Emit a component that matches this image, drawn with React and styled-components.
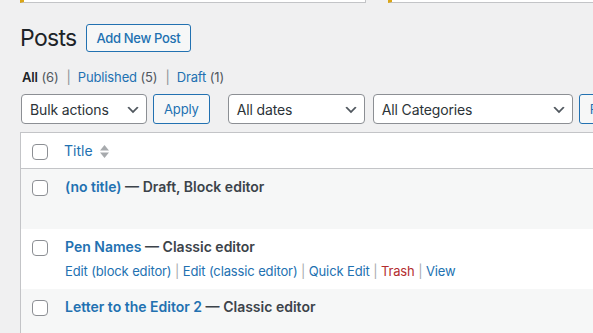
import React from "react";
import styled, { createGlobalStyle } from "styled-components";

const GlobalStyle = createGlobalStyle`
  body {
    margin: 0;
    background: #f0f0f1;
    font-family: Inter, "Noto Sans", sans-serif;
    color: #3c434a;
    overflow: hidden;
  }
`;

const Wrap = styled.div`
  padding-left: 20px;
  width: 780px;
`;

const NoticeRow = styled.div`
  display: flex;
  gap: 22px;
  margin-top: -30px;
`;

const Notice = styled.div`
  box-sizing: border-box;
  height: 33px;
  width: ${(p) => (p.$grow ? "auto" : "346px")};
  flex: ${(p) => (p.$grow ? "1" : "none")};
  background: #fff;
  border: 1px solid #c3c4c7;
  border-left: 4px solid #dba617;
`;

const HeaderRow = styled.div`
  display: flex;
  align-items: center;
  gap: 9px;
  margin-top: 21px;
  height: 28px;
`;

const Heading = styled.h1`
  margin: 0;
  font-size: 23px;
  font-weight: 400;
  letter-spacing: -0.03em;
  color: #1d2327;
  line-height: 28px;
`;

const OutlineButton = styled.button`
  box-sizing: border-box;
  height: ${(p) => p.$h || "30px"};
  padding: 0 10px;
  background: #f6f7f7;
  border: 1px solid #2271b1;
  border-radius: 3px;
  color: #2271b1;
  font-family: inherit;
  font-size: 13px;
  font-weight: ${(p) => p.$weight || 400};
  letter-spacing: ${(p) => (p.$weight ? "-0.025em" : "-0.01em")};
  cursor: pointer;
  flex: none;
`;

const Views = styled.ul`
  display: flex;
  list-style: none;
  margin: 15px 0 0;
  padding: 0 0 0 2px;
  font-size: 13px;
  line-height: 20px;
  letter-spacing: -0.01em;
  color: #50575e;
`;

const ViewItem = styled.li`
  white-space: pre;
`;

const ViewLink = styled.a`
  color: ${(p) => (p.$current ? "#1d2327" : "#2271b1")};
  font-weight: ${(p) => (p.$current ? 600 : 400)};
  text-decoration: none;
`;

const Sep = styled.span`
  color: #8c8f94;
  padding: 0 7px 0 8px;
`;

const Toolbar = styled.div`
  display: flex;
  align-items: center;
  margin-top: 7px;
  padding-left: 1px;
`;

const Group = styled.div`
  display: flex;
  gap: ${(p) => p.$gap || "6px"};
  margin-right: ${(p) => p.$mr || "0"};
`;

const SelectBox = styled.div`
  box-sizing: border-box;
  width: ${(p) => p.$w};
  height: 30px;
  display: flex;
  align-items: center;
  justify-content: space-between;
  padding: 0 5px 0 8px;
  background: #fff;
  border: 1px solid #8c8f94;
  border-radius: 4px;
  font-size: 14px;
  letter-spacing: -0.01em;
  color: #2c3338;
  flex: none;
`;

const Chevron = styled.svg`
  width: 16px;
  height: 16px;
  margin-top: 2px;
  fill: #50575e;
`;

const Select = ({ w, children }) => (
  <SelectBox $w={w}>
    <span>{children}</span>
    <Chevron viewBox="0 0 20 20">
      <path d="M5 6l5 5 5-5 2 1-7 7-7-7 2-1z" />
    </Chevron>
  </SelectBox>
);

const Table = styled.div`
  margin-top: 8px;
  background: #fff;
  border: 1px solid #c3c4c7;
`;

const Row = styled.div`
  display: flex;
  background: ${(p) => (p.$alt ? "#f6f7f7" : "#fff")};
  border-bottom: ${(p) => (p.$head ? "1px solid #c3c4c7" : "none")};
  height: ${(p) => (p.$head ? "35px" : "60px")};
  box-sizing: ${(p) => (p.$head ? "content-box" : "border-box")};
`;

const CheckCell = styled.div`
  width: 33px;
  padding-left: 11px;
  padding-top: 11px;
  box-sizing: border-box;
  flex: none;
`;

const Checkbox = styled.span`
  display: block;
  box-sizing: border-box;
  width: 16px;
  height: 16px;
  border: 1px solid #8c8f94;
  border-radius: 4px;
  background: #fff;
`;

const HeadCell = styled.div`
  display: flex;
  align-items: center;
  gap: 7px;
  padding-left: 10px;
  font-size: 14px;
  color: #2271b1;
`;

const SortIcon = styled.svg`
  width: 9px;
  height: 13px;
  fill: #a7aaad;
  margin-top: 1px;
`;

const TitleCell = styled.div`
  padding: 8px 0 0 11px;
`;

const RowTitle = styled.div`
  font-size: 14px;
  font-weight: 600;
  line-height: 20px;
  color: #3c434a;
`;

const TitleLink = styled.a`
  color: #2271b1;
  text-decoration: none;
`;

const Actions = styled.div`
  padding-top: 4px;
  font-size: 13px;
  line-height: 20px;
  letter-spacing: -0.01em;
  color: #a7aaad;
  visibility: ${(p) => (p.$show ? "visible" : "hidden")};
  white-space: pre;
`;

const ActionLink = styled.a`
  color: ${(p) => (p.$danger ? "#b32d2e" : "#2271b1")};
  text-decoration: none;
`;

const posts = [
  { title: "(no title)", state: "Draft, Block editor" },
  { title: "Pen Names", state: "Classic editor", actions: true },
  { title: "Letter to the Editor 2", state: "Classic editor" },
];

const actions = [
  "Edit (block editor)",
  "Edit (classic editor)",
  "Quick Edit",
  "Trash",
  "View",
];

export default function App() {
  return (
    <>
      <GlobalStyle />
      <Wrap>
        <NoticeRow>
          <Notice />
          <Notice $grow />
        </NoticeRow>

        <HeaderRow>
          <Heading>Posts</Heading>
          <OutlineButton $h="28px" $weight={500}>
            Add New Post
          </OutlineButton>
        </HeaderRow>

        <Views>
          <ViewItem>
            <ViewLink $current>All</ViewLink> (6)<Sep>|</Sep>
          </ViewItem>
          <ViewItem>
            <ViewLink>Published</ViewLink> (5)<Sep>|</Sep>
          </ViewItem>
          <ViewItem>
            <ViewLink>Draft</ViewLink> (1)
          </ViewItem>
        </Views>

        <Toolbar>
          <Group $mr="18px">
            <Select w="126px">Bulk actions</Select>
            <OutlineButton>Apply</OutlineButton>
          </Group>
          <Group $gap="8px" $mr="6px">
            <Select w="137px">All dates</Select>
            <Select w="200px">All Categories</Select>
          </Group>
          <OutlineButton>Filter</OutlineButton>
        </Toolbar>

        <Table>
          <Row $head>
            <CheckCell>
              <Checkbox />
            </CheckCell>
            <HeadCell>
              Title
              <SortIcon viewBox="0 0 9 13">
                <path d="M0 5.5L4.5 0 9 5.5z" />
                <path d="M0 7.5L4.5 13 9 7.5z" />
              </SortIcon>
            </HeadCell>
          </Row>
          {posts.map((p, i) => (
            <Row key={p.title} $alt={i % 2 === 0}>
              <CheckCell>
                <Checkbox />
              </CheckCell>
              <TitleCell>
                <RowTitle>
                  <TitleLink>{p.title}</TitleLink> — {p.state}
                </RowTitle>
                <Actions $show={p.actions}>
                  {actions.map((a, j) => (
                    <React.Fragment key={a}>
                      <ActionLink $danger={a === "Trash"}>{a}</ActionLink>
                      {j < actions.length - 1 ? " | " : ""}
                    </React.Fragment>
                  ))}
                </Actions>
              </TitleCell>
            </Row>
          ))}
        </Table>
      </Wrap>
    </>
  );
}
